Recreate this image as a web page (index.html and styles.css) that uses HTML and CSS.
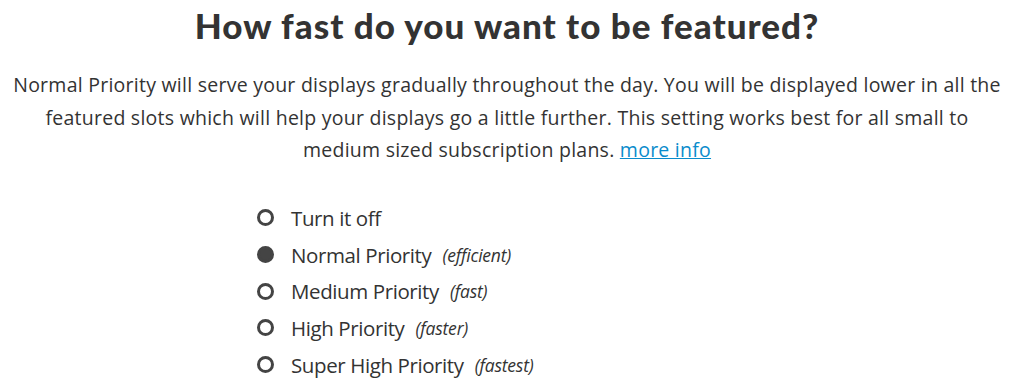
FILE: index.html
```html
<!DOCTYPE html>
<html>
<head>
<meta charset="utf-8">
<link rel="stylesheet" href="styles.css">
</head>
<body>
<div class="page">
  <h1 class="title">How fast do you want to be featured?</h1>
  <p class="desc">Normal Priority will serve your displays gradually throughout the day. You will be displayed lower in all the featured slots which will help your displays go a little further. This setting works best for all small to medium sized subscription plans. <a href="#" class="more">more info</a></p>
  <ul class="options">
    <li class="option"><span class="radio"></span><span class="label">Turn it off</span></li>
    <li class="option"><span class="radio checked"></span><span class="label">Normal Priority</span><span class="hint">(efficient)</span></li>
    <li class="option"><span class="radio"></span><span class="label">Medium Priority</span><span class="hint">(fast)</span></li>
    <li class="option"><span class="radio"></span><span class="label">High Priority</span><span class="hint">(faster)</span></li>
    <li class="option"><span class="radio"></span><span class="label">Super High Priority</span><span class="hint">(fastest)</span></li>
  </ul>
</div>
</body>
</html>
```

FILE: styles.css
```css
html, body {
  margin: 0;
  padding: 0;
  background: #fff;
}
.page {
  width: 1014px;
  color: #333;
  font-family: "Open Sans", "Noto Sans", sans-serif;
}
.title {
  margin: 0;
  padding-top: 3px;
  text-align: center;
  font-family: "Lato", sans-serif;
  font-weight: 900;
  font-size: 35px;
  line-height: 44px;
  letter-spacing: 1px;
  color: #333;
}
.desc {
  margin: 22px 0 0;
  padding: 0 10px;
  text-align: center;
  font-size: 19.5px;
  letter-spacing: 0.25px;
  line-height: 32.5px;
}
.more {
  color: #0a8ccc;
  text-decoration: underline;
}
.options {
  list-style: none;
  margin: 33px 0 0;
  padding: 0 0 0 257px;
}
.option {
  display: flex;
  align-items: center;
  height: 36.7px;
}
.radio {
  box-sizing: border-box;
  width: 17px;
  height: 17px;
  border: 3px solid #444;
  border-radius: 50%;
  margin-right: 17px;
  flex: none;
}
.radio.checked {
  background: #444;
}
.label {
  font-size: 20.5px;
  letter-spacing: -0.4px;
}
.hint {
  font-style: italic;
  font-size: 17.5px;
  letter-spacing: -0.2px;
  margin-left: 11px;
}
```
